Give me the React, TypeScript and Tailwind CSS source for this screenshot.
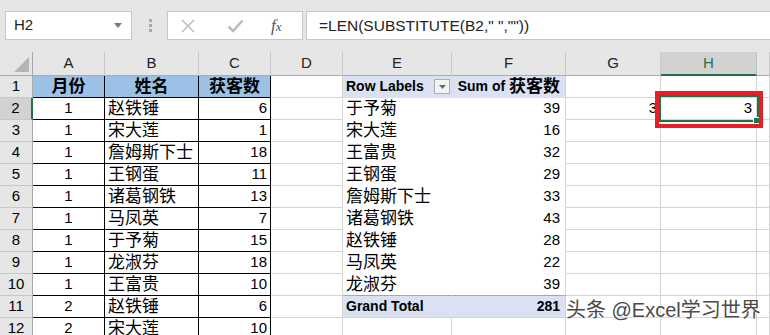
import React from "react";

type CellDef = { t?: React.ReactNode; c: string };

function Cell({ t, c }: CellDef) {
  return (
    <div className={"flex items-center overflow-hidden whitespace-nowrap border-r border-b text-[15px] text-black " + c}>
      {t}
    </div>
  );
}

const cjk = (s: string) => <span className="text-[17px] leading-none">{s}</span>;

const table: [string, string, string][] = [
  ["1", "赵铁锤", "6"],
  ["1", "宋大莲", "1"],
  ["1", "詹姆斯下士", "18"],
  ["1", "王钢蛋", "11"],
  ["1", "诸葛钢铁", "13"],
  ["1", "马凤英", "7"],
  ["1", "于予菊", "15"],
  ["1", "龙淑芬", "18"],
  ["1", "王富贵", "10"],
  ["2", "赵铁锤", "6"],
  ["2", "宋大莲", "10"],
];

const pivot: [string, string][] = [
  ["于予菊", "39"],
  ["宋大莲", "16"],
  ["王富贵", "32"],
  ["王钢蛋", "29"],
  ["詹姆斯下士", "33"],
  ["诸葛钢铁", "43"],
  ["赵铁锤", "28"],
  ["马凤英", "22"],
  ["龙淑芬", "39"],
];

const RH = "justify-center bg-[#e6e6e6] text-[#333] border-r-[#a8a8a8] border-b-[#c8c8c8]";
const RH_SEL = "justify-center bg-[#d2d2d2] text-[#217346] border-r-2 border-r-[#217346] border-b-[#c8c8c8]";
const PLAIN = "border-r-[#d4d4d4] border-b-[#d4d4d4]";
const T_HEAD = "justify-center bg-[#9bc2e6] font-bold border-r-black border-b-black";
const T_CENTER = "justify-center border-r-black border-b-black";
const T_LEFT = "pl-[3px] border-r-black border-b-black";
const T_RIGHT = "justify-end pr-[3px] border-r-black border-b-black";
const P_HEAD_E = "bg-[#d9e1f2] font-bold pl-[3px] pr-[1px] justify-between border-r-[#d9e1f2] border-b-[#d9e1f2]";
const P_HEAD_F = "bg-[#d9e1f2] font-bold justify-end pr-[5px] border-r-[#d4d4d4] border-b-[#d9e1f2]";
const P_E = "pl-[3px] border-r-white border-b-white";
const P_F = "justify-end pr-[5px] border-r-[#d4d4d4] border-b-white";
const P_E_LAST = "pl-[3px] border-r-white border-b-[#8ea9db]";
const P_F_LAST = "justify-end pr-[5px] border-r-[#d4d4d4] border-b-[#8ea9db]";
const P_TOT_E = "bg-[#d9e1f2] font-bold pl-[3px] border-r-[#d9e1f2] border-b-[#d4d4d4]";
const P_TOT_F = "bg-[#d9e1f2] font-bold justify-end pr-[5px] border-r-[#d4d4d4] border-b-[#d4d4d4]";

function buildRows(): CellDef[][] {
  const rows: CellDef[][] = [];
  rows.push([
    { t: "1", c: RH },
    { t: cjk("月份"), c: T_HEAD },
    { t: cjk("姓名"), c: T_HEAD },
    { t: cjk("获客数"), c: T_HEAD },
    { c: PLAIN },
    {
      t: (
        <>
          <span className="text-[14px]">Row Labels</span>
          <span className="flex h-[15px] w-[16px] items-center justify-center border border-[#adadad] bg-[#f3f3f3]">
            <svg width="7" height="4" viewBox="0 0 7 4">
              <path d="M0 0h7L3.5 4z" fill="#6b6b6b" />
            </svg>
          </span>
        </>
      ),
      c: P_HEAD_E,
    },
    {
      t: (
        <>
          <span className="text-[14px]">Sum of&nbsp;</span>
          {cjk("获客数")}
        </>
      ),
      c: P_HEAD_F,
    },
    { c: PLAIN },
    { c: PLAIN },
    { c: PLAIN },
  ]);
  for (let i = 0; i < 11; i++) {
    const r = i + 2;
    const [m, n, v] = table[i];
    const row: CellDef[] = [
      { t: String(r), c: r === 2 ? RH_SEL : RH },
      { t: m, c: T_CENTER },
      { t: cjk(n), c: T_LEFT },
      { t: v, c: T_RIGHT },
      { c: PLAIN },
    ];
    if (i < 9) {
      const last = i === 8;
      row.push({ t: cjk(pivot[i][0]), c: last ? P_E_LAST : P_E });
      row.push({ t: pivot[i][1], c: last ? P_F_LAST : P_F });
    } else if (i === 9) {
      row.push({ t: <span className="text-[14px]">Grand Total</span>, c: P_TOT_E });
      row.push({ t: <span className="text-[14px]">281</span>, c: P_TOT_F });
    } else {
      row.push({ c: PLAIN });
      row.push({ c: PLAIN });
    }
    if (r === 2) {
      row.push({ t: "3", c: "justify-end pr-[3px] " + PLAIN });
      row.push({ t: "3", c: "justify-end pr-[4px] " + PLAIN });
    } else {
      row.push({ c: PLAIN });
      row.push({ c: PLAIN });
    }
    row.push({ c: PLAIN });
    rows.push(row);
  }
  return rows;
}

const letters = ["A", "B", "C", "D", "E", "F", "G", "H", ""];

export default function App() {
  const rows = buildRows();
  return (
    <div className="relative h-[335px] w-[770px] overflow-hidden bg-white font-['Liberation_Sans','Noto_Sans_CJK_SC',sans-serif]">
      {/* formula bar */}
      <div className="flex h-[52px] items-start bg-[#e6e6e6] pl-[5px] pt-[11px]">
        <div className="flex h-[29px] w-[127px] items-center justify-between border border-[#c6c6c6] bg-white pl-[8px] pr-[9px]">
          <span className="text-[15px] text-[#222]">H2</span>
          <svg width="8" height="5" viewBox="0 0 8 5">
            <path d="M0 0h8L4 5z" fill="#7a7a7a" />
          </svg>
        </div>
        <div className="ml-[17px] mt-[8px] flex flex-col gap-[2px]">
          <div className="h-[3px] w-[3px] bg-[#a8a8a8]" />
          <div className="h-[3px] w-[3px] bg-[#a8a8a8]" />
          <div className="h-[3px] w-[3px] bg-[#a8a8a8]" />
        </div>
        <div className="ml-[15px] flex h-[29px] w-[136px] items-center border border-[#c6c6c6] bg-white">
          <svg className="ml-[13px]" width="14" height="14" viewBox="0 0 14 14">
            <path d="M1 1L13 13M13 1L1 13" stroke="#b8b8b8" strokeWidth="1.4" fill="none" />
          </svg>
          <svg className="ml-[32px]" width="17" height="14" viewBox="0 0 17 14">
            <path d="M1.5 7.5L6 12L15.5 1.5" stroke="#b8b8b8" strokeWidth="2.4" fill="none" />
          </svg>
          <span className="ml-[27px] font-['Liberation_Serif',serif] text-[17px] italic text-[#555]">
            f<span className="text-[13px]">x</span>
          </span>
        </div>
        <div className="ml-[3px] flex h-[29px] flex-1 items-center border border-r-0 border-[#c6c6c6] bg-white pl-[12px]">
          <span className="text-[15.5px] text-[#222]">=LEN(SUBSTITUTE(B2," ",""))</span>
        </div>
      </div>

      {/* sheet */}
      <div className="grid grid-cols-[33px_72px_94px_72px_72px_109px_114px_95px_96px_1fr] grid-rows-[24px_repeat(12,22px)]">
        <div className="relative border-r border-b border-r-[#a8a8a8] border-b-[#ababab] bg-[#e6e6e6]">
          <svg className="absolute bottom-[3px] right-[3px]" width="15" height="15" viewBox="0 0 15 15">
            <path d="M15 0V15H0z" fill="#b5b5b5" />
          </svg>
        </div>
        {letters.map((l, i) =>
          l === "H" ? (
            <div
              key={i}
              className="flex items-center justify-center border-r border-b-2 border-r-[#c0c0c0] border-b-[#217346] bg-[#d2d2d2] text-[15px] text-[#217346]"
            >
              {l}
            </div>
          ) : (
            <div
              key={i}
              className="flex items-center justify-center border-r border-b border-r-[#c8c8c8] border-b-[#ababab] bg-[#e6e6e6] text-[15px] text-[#222]"
            >
              {l}
            </div>
          )
        )}
        {rows.map((row, ri) => row.map((cell, ci) => <Cell key={ri + "-" + ci} t={cell.t} c={cell.c} />))}
      </div>

      {/* selection */}
      <div className="pointer-events-none absolute left-[659px] top-[95px] h-[27px] w-[100px] border-2 border-[#217346]" />
      <div className="pointer-events-none absolute left-[753px] top-[117px] h-[6px] w-[6px] border-l border-t border-white bg-[#217346]" />
      {/* red annotation */}
      <div className="pointer-events-none absolute left-[655px] top-[91px] h-[37px] w-[108px] border-4 border-[#e81d25]" />
      {/* watermark */}
      <div className="pointer-events-none absolute left-[566px] top-[296px] whitespace-nowrap text-[20px] leading-[28px] text-[#4a4a4a] [text-shadow:0_0_2px_#fff,0_0_2px_#fff]">
        头条 @Excel学习世界
      </div>
    </div>
  );
}
